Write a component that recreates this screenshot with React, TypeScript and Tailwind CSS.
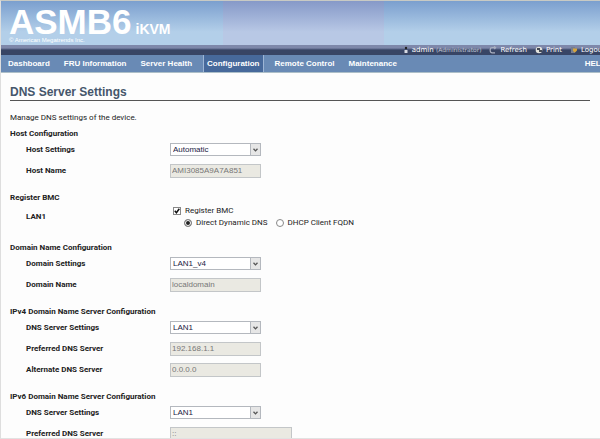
import React, { useState } from 'react';

interface FieldProps {
  id: string;
  label: string;
  children: React.ReactNode;
}

const Field: React.FC<FieldProps> = ({ id, label, children }) => (
  <div className="flex h-[21px] items-center pl-4">
    <label htmlFor={id} className="w-[144px] shrink-0 font-bold">{label}</label>
    {children}
  </div>
);

interface SelectFieldProps {
  id: string;
  label: string;
  options: string[];
}

const SelectField: React.FC<SelectFieldProps> = ({ id, label, options }) => {
  const [value, setValue] = useState(options[0]);
  return (
    <Field id={id} label={label}>
      <div className="relative h-[13px] w-[91px] font-['Liberation_Sans',Arial,sans-serif]">
        <select
          id={id}
          value={value}
          onChange={e => setValue(e.target.value)}
          className="block h-full w-full appearance-none border border-[#b4b8be] bg-white pl-[2px] leading-[11px] text-[#222244]"
        >
          {options.map(option => <option key={option}>{option}</option>)}
        </select>
        <span className="pointer-events-none absolute top-0 right-0 flex h-full w-[11px] items-center justify-center border border-[#b4b8be] bg-[#e6e6e6]">
          <svg viewBox="0 0 5 4" className="h-1 w-[5px]" fill="none" stroke="#555" strokeWidth="1.3">
            <path d="M.5 .7 2.5 2.9 4.5 .7" />
          </svg>
        </span>
      </div>
    </Field>
  );
};

interface ReadOnlyFieldProps {
  id: string;
  label: string;
  value: string;
  wide?: boolean;
}

const ReadOnlyField: React.FC<ReadOnlyFieldProps> = ({ id, label, value, wide }) => (
  <Field id={id} label={label}>
    <input
      id={id}
      type="text"
      value={value}
      disabled
      className={`h-[14px] border border-[#c3c6c8] bg-[#eae9e2] px-px font-['Liberation_Sans',Arial,sans-serif] text-[#777] ${wide ? 'w-[122px]' : 'w-[91px]'}`}
    />
  </Field>
);

const Section: React.FC<{ title: string; children: React.ReactNode }> = ({ title, children }) => (
  <section className="pb-3">
    <h2 className="h-[10px] font-bold">{title}</h2>
    {children}
  </section>
);

const RegisterSection: React.FC = () => {
  const [register, setRegister] = useState(true);
  const [mode, setMode] = useState('dns');

  return (
    <Section title="Register BMC">
      <div className="flex h-7 items-center pl-4">
        <span className="w-[144px] shrink-0 font-bold">LAN1</span>
        <div className="flex flex-col pl-[3px]">
          <label className="flex h-3 items-center gap-1">
            <span className="relative flex h-2 w-2">
              <input
                type="checkbox"
                checked={register}
                onChange={e => setRegister(e.target.checked)}
                className="h-2 w-2 appearance-none border border-[#888] bg-white"
              />
              {register && (
                <svg viewBox="0 0 8 8" className="pointer-events-none absolute inset-0 h-2 w-2" fill="none" stroke="#111" strokeWidth="1.5">
                  <path d="M1.8 3.8 3.4 5.8 6.3 1.8" />
                </svg>
              )}
            </span>
            Register BMC
          </label>
          <div className="flex h-3 items-center gap-2 pl-[11px]">
            <label className="flex items-center gap-1">
              <input
                type="radio"
                name="mode"
                checked={mode === 'dns'}
                onChange={() => setMode('dns')}
                className="h-2 w-2 appearance-none rounded-full border border-[#888] bg-white checked:bg-[#222] checked:shadow-[inset_0_0_0_1px_white]"
              />
              Direct Dynamic DNS
            </label>
            <label className="flex items-center gap-1">
              <input
                type="radio"
                name="mode"
                checked={mode === 'fqdn'}
                onChange={() => setMode('fqdn')}
                className="h-2 w-2 appearance-none rounded-full border border-[#888] bg-white checked:bg-[#222] checked:shadow-[inset_0_0_0_1px_white]"
              />
              DHCP Client FQDN
            </label>
          </div>
        </div>
      </div>
    </Section>
  );
};

const navItems = ['Dashboard', 'FRU Information', 'Server Health', 'Configuration', 'Remote Control', 'Maintenance'];

const StatusBar: React.FC = () => (
  <div className="flex h-[10px] items-center justify-end overflow-hidden bg-linear-to-b from-[#7e88aa] from-30% to-[#384565] to-50% font-['DejaVu_Sans',sans-serif] text-[7px] whitespace-nowrap text-white">
    <div className="-mr-[5px] flex shrink-0 items-center gap-2">
      <span className="flex items-center gap-1">
        <svg viewBox="0 0 4 8" className="h-2 w-1" fill="#d7dbe4">
          <circle cx="2" cy="2" r="1.2" fill="#222" />
          <path d="M.5 4h3v3h-3z" />
        </svg>
        <span>admin <span className="text-[6px] text-[#c0c5d2]">(Administrator)</span></span>
      </span>
      <button type="button" className="flex items-center gap-[3px]">
        <svg viewBox="0 0 8 8" className="h-2 w-2" fill="none" stroke="#a9afbf" strokeWidth="1.2">
          <path d="M6 6.8H3.2A2 2 0 0 1 1.2 4.8V3.4A2 2 0 0 1 3.2 1.6H6.4M5 .3 6.6 1.6 5.4 3.2" />
        </svg>
        Refresh
      </button>
      <button type="button" className="flex items-center gap-[3px]">
        <svg viewBox="0 0 8 8" className="h-2 w-2">
          <circle cx="4" cy="4" r="3.3" fill="#e2e2dc" />
          <path d="M2 2h3v2H2zM4 4h3v2H4z" fill="#454a55" />
        </svg>
        Print
      </button>
      <button type="button" className="flex items-center gap-[3px]">
        <svg viewBox="0 0 8 8" className="h-2 w-2">
          <path d="M1 1h4v6H1z" fill="#777e8d" />
          <path d="M3 2.5h4v2L5 6.5 3 5z" fill="#d7a63c" />
        </svg>
        Logout
      </button>
    </div>
  </div>
);

const App: React.FC = () => {
  const [active, setActive] = useState('Configuration');

  return (
    <div className="flex h-screen flex-col overflow-hidden border-t border-b border-l border-t-[#c8cac4] border-b-[#e2e2e2] border-l-[#dedede] bg-[#fdfdfd] font-['Liberation_Sans',Arial,sans-serif] text-[8px] leading-[10px] text-[#222]">
      <header className="shrink-0">
        <div className="relative flex h-11 flex-col bg-linear-to-b from-[#7b9fce] to-[#b3cfe9] to-70% pl-2 text-white">
          <div className="absolute inset-y-0 left-[37%] w-[27%] bg-linear-to-b from-[#8699c8] to-[#b8c8e5] to-70%" />
          <h1 className="flex items-baseline gap-1 pt-[6px] text-[35px] leading-[29px] font-bold">
            ASMB6 <span className="text-[14px] leading-none">iKVM</span>
          </h1>
          <p className="pt-px text-[6px] leading-[6px]">© American Megatrends Inc.</p>
        </div>
        <StatusBar />
        <nav className="flex h-[18px] items-stretch justify-between overflow-hidden border-b border-[#adbfc8] bg-[#698ab5] font-bold whitespace-nowrap text-white">
          <div className="flex">
            {navItems.map(item => (
              <button
                key={item}
                type="button"
                onClick={() => setActive(item)}
                className={item === active
                  ? 'mx-1 border-x border-[#9db5d5] bg-[#47699b] px-[3px]'
                  : 'px-[7px]'}
              >
                {item}
              </button>
            ))}
          </div>
          <a href="#help" className="-mr-[6px] self-center">HELP</a>
        </nav>
      </header>

      <main className="min-h-0 flex-1 overflow-hidden px-[9px] pt-3 font-[Roboto,sans-serif]">
        <h1 className="mr-px border-b border-[#555] pb-px font-['Liberation_Sans',Arial,sans-serif] text-[12px] leading-[14px] font-bold text-[#45566b]">DNS Server Settings</h1>
        <p className="pt-3 pb-[6px]">Manage DNS settings of the device.</p>
        <Section title="Host Configuration">
          <SelectField id="host-settings" label="Host Settings" options={['Automatic', 'Manual']} />
          <ReadOnlyField id="host-name" label="Host Name" value="AMI3085A9A7A851" />
        </Section>
        <RegisterSection />
        <Section title="Domain Name Configuration">
          <SelectField id="domain-settings" label="Domain Settings" options={['LAN1_v4', 'LAN1_v6']} />
          <ReadOnlyField id="domain-name" label="Domain Name" value="localdomain" />
        </Section>
        <Section title="IPv4 Domain Name Server Configuration">
          <SelectField id="v4-settings" label="DNS Server Settings" options={['LAN1', 'Manual']} />
          <ReadOnlyField id="v4-preferred" label="Preferred DNS Server" value="192.168.1.1" />
          <ReadOnlyField id="v4-alternate" label="Alternate DNS Server" value="0.0.0.0" />
        </Section>
        <Section title="IPv6 Domain Name Server Configuration">
          <SelectField id="v6-settings" label="DNS Server Settings" options={['LAN1', 'Manual']} />
          <ReadOnlyField id="v6-preferred" label="Preferred DNS Server" value="::" wide />
        </Section>
      </main>
    </div>
  );
};

export default App;
